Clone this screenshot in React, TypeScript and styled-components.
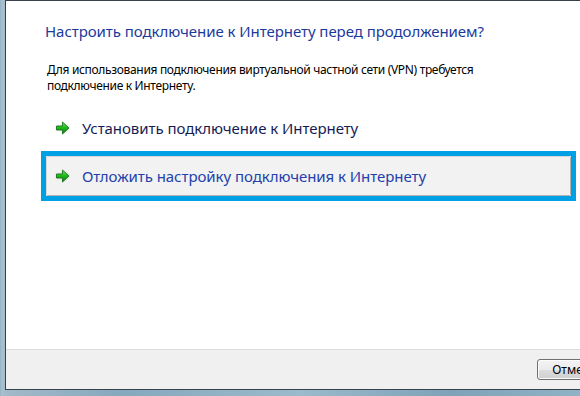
import React from "react";
import styled, { createGlobalStyle } from "styled-components";

const GlobalStyle = createGlobalStyle`
  html, body {
    margin: 0;
    padding: 0;
    overflow: hidden;
  }
  body {
    font-family: "Noto Sans", "Open Sans", sans-serif;
  }
`;

interface LinkProps {
  $active?: boolean;
}

function GreenArrow() {
  return (
    <svg width="16" height="16" viewBox="0 0 16 16">
      <defs>
        <linearGradient id="arrowFill" x1="0" y1="0" x2="0" y2="1">
          <stop offset="0" stopColor="#6ae865" />
          <stop offset="0.45" stopColor="#22bb1f" />
          <stop offset="1" stopColor="#0a7a0c" />
        </linearGradient>
        <filter id="arrowGlow" x="-30%" y="-30%" width="160%" height="160%">
          <feGaussianBlur stdDeviation="1.1" />
        </filter>
      </defs>
      <path
        d="M1.5 6 H7.5 V2 L14 8 L7.5 14 V10 H1.5 Z"
        fill="#8a8a8a"
        opacity="0.5"
        filter="url(#arrowGlow)"
      />
      <path
        d="M1.5 6 H7.5 V2 L14 8 L7.5 14 V10 H1.5 Z"
        fill="url(#arrowFill)"
        stroke="#0d6f10"
        strokeWidth="0.8"
        strokeLinejoin="round"
      />
    </svg>
  );
}

export default function App() {
  return (
    <>
      <GlobalStyle />
      <Frame>
        <Window>
          <Content>
            <Heading>Настроить подключение к Интернету перед продолжением?</Heading>
            <Description>
              Для использования подключения виртуальной частной сети (VPN) требуется
              <br />
              подключение к Интернету.
            </Description>
            <LinkList>
              <CommandLink>
                <GreenArrow />
                <LinkText>Установить подключение к Интернету</LinkText>
              </CommandLink>
              <Highlight>
                <CommandLink $active>
                  <GreenArrow />
                  <LinkText $active>Отложить настройку подключения к Интернету</LinkText>
                </CommandLink>
              </Highlight>
            </LinkList>
          </Content>
          <Footer>
            <Button>Отмена</Button>
          </Footer>
        </Window>
      </Frame>
    </>
  );
}

const Frame = styled("div")`
  width: 580px;
  height: 396px;
  overflow: hidden;
  box-sizing: border-box;
  padding-left: 5px;
  background: linear-gradient(
    90deg,
    #93b1c4 0px,
    #aac1cf 2px,
    #a2bac9 5px,
    #86a8bd 120px,
    #9bbacb 300px,
    #7fa2b8 450px,
    #90b2c5 580px
  );
`;

const Window = styled("div")`
  width: 620px;
  height: 390px;
  box-sizing: border-box;
  border-top: 1px solid #38424c;
  border-left: 1px solid #38424c;
  border-bottom: 1px solid #38424c;
  display: flex;
  flex-direction: column;
  background: #ffffff;
`;

const Content = styled("div")`
  flex: 1;
  background: #ffffff;
  padding: 20px 0 0 40px;
`;

const Heading = styled("h1")`
  margin: 0 0 0 -1px;
  font-size: 15px;
  line-height: 20px;
  font-weight: normal;
  letter-spacing: -0.05px;
  color: #1b3a9c;
`;

const Description = styled("p")`
  margin: 21px 0 0 1px;
  font-size: 12px;
  line-height: 16px;
  letter-spacing: -0.33px;
  color: #000000;
`;

const LinkList = styled("div")`
  display: flex;
  flex-direction: column;
  gap: 8px;
  margin-top: 14px;
  width: 525px;
`;

const Highlight = styled("div")`
  margin: -5px;
  border: 5px solid #00a1e4;
`;

const CommandLink = styled("div")<LinkProps>`
  height: 40px;
  box-sizing: border-box;
  display: flex;
  align-items: center;
  gap: 11px;
  padding-left: 8px;
  border-radius: 2px;
  border: 1px solid ${(p) => (p.$active ? "#d8d8d8" : "transparent")};
  border-right-color: ${(p) => (p.$active ? "#b0b0b0" : "transparent")};
  border-bottom-color: ${(p) => (p.$active ? "#b0b0b0" : "transparent")};
  background: ${(p) => (p.$active ? "#f1f2f1" : "transparent")};
`;

const LinkText = styled("span")<LinkProps>`
  font-size: 15px;
  line-height: 20px;
  letter-spacing: -0.05px;
  color: ${(p) => (p.$active ? "#2340ad" : "#151c55")};
`;

const Footer = styled("div")`
  height: 40px;
  box-sizing: border-box;
  border-top: 1px solid #dcdcdc;
  background: #f0f0f0;
  display: flex;
  align-items: center;
  justify-content: flex-end;
  padding-right: 13px;
`;

const Button = styled("div")`
  width: 75px;
  height: 21px;
  box-sizing: border-box;
  border: 1px solid #707070;
  border-radius: 3px;
  background: linear-gradient(180deg, #f3f3f3 0%, #ebebeb 50%, #dddddd 51%, #cfcfcf 100%);
  font-size: 12px;
  line-height: 19px;
  text-align: center;
  color: #000000;
  box-shadow: inset 0 0 0 1px #fcfcfc;
`;
